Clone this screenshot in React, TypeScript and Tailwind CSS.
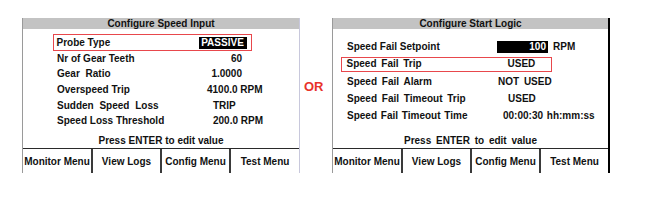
import React from "react";

const font = { fontFamily: '"Liberation Sans", Arial, sans-serif' };

function Buttons({ widths }: { widths: string[] }) {
  const labels = ["Monitor Menu", "View Logs", "Config Menu", "Test Menu"];
  return (
    <div className="flex h-[25px] border-t-[1.5px] border-[#2a2a2a]">
      {labels.map((l, i) => (
        <div
          key={l}
          className={`${widths[i]} flex items-center justify-center pt-[2px] ${i > 0 ? "border-l-2 border-[#3a3a3a]" : ""}`}
        >
          {l}
        </div>
      ))}
    </div>
  );
}

export default function App() {
  return (
    <div
      className="w-[649px] h-[209px] bg-white flex items-start pt-[18px] text-[10px] font-bold text-[#111] leading-[12px]"
      style={font}
    >
      {/* Left panel */}
      <div className="ml-[22px] w-[278px] h-[155px] border-l border-l-[#9a9a9a] border-r border-r-[#c8c8dc] flex flex-col">
        <div className="h-[11px] bg-[#c3c3c3] text-center leading-[11px]">Configure Speed Input</div>
        <div className="pt-[5px] flex flex-col">
          <div className="h-[17px] flex items-center">
            <div className="ml-[30px] w-[199px] h-[17px] border-[1.5px] border-[#e8474c] pl-[2.5px] flex items-center">
              <div className="w-[142px]">Probe Type</div>
              <div className="w-[48px] h-[12px] bg-black text-white text-center leading-[12px]">PASSIVE</div>
            </div>
          </div>
          <div className="h-[15.6px] flex items-center">
            <div className="pl-[34px] w-[176px]">Nr of Gear Teeth</div>
            <div className="w-[43px] text-right">60</div>
          </div>
          <div className="h-[15.6px] flex items-center">
            <div className="pl-[34px] w-[176px] [word-spacing:3px]">Gear Ratio</div>
            <div className="w-[43px] text-right">1.0000</div>
          </div>
          <div className="h-[15.6px] flex items-center">
            <div className="pl-[34px] w-[176px]">Overspeed Trip</div>
            <div className="ml-[8px]">4100.0 RPM</div>
          </div>
          <div className="h-[15.6px] flex items-center">
            <div className="pl-[34px] w-[176px] [word-spacing:3px]">Sudden Speed Loss</div>
            <div className="ml-[14px]">TRIP</div>
          </div>
          <div className="h-[15.6px] flex items-center">
            <div className="pl-[34px] w-[176px]">Speed Loss Threshold</div>
            <div className="ml-[14px]">200.0 RPM</div>
          </div>
        </div>
        <div className="flex-1 flex items-end justify-center pb-[1px]">Press ENTER to edit value</div>
        <Buttons widths={["w-[68px]", "w-[69px]", "w-[69px]", "flex-1"]} />
      </div>

      {/* OR */}
      <div className="w-[32px] pt-[62px] pl-[4px]">
        <div className="text-[13px] leading-[14px] font-bold text-[#e8332b]">OR</div>
      </div>

      {/* Right panel */}
      <div className="w-[278px] h-[155px] border-l border-l-[#9a9a9a] border-r-2 border-r-black flex flex-col">
        <div className="h-[11px] bg-[#c3c3c3] text-center leading-[11px]">Configure Start Logic</div>
        <div className="pt-[9.5px] flex flex-col [word-spacing:2px]">
          <div className="h-[17.3px] flex items-center">
            <div className="pl-[14px] w-[164px] [word-spacing:0px]">Speed Fail Setpoint</div>
            <div className="w-[51px] h-[12px] bg-black text-white text-right pr-[2px] leading-[12px]">100</div>
            <div className="ml-[5px]">RPM</div>
          </div>
          <div className="h-[17.3px] flex items-center">
            <div className="ml-[8px] w-[211px] h-[15px] border-[1.5px] border-[#e8474c] pl-[4.5px] flex items-center">
              <div className="w-[150px]">Speed Fail Trip</div>
              <div className="ml-[11px]">USED</div>
            </div>
          </div>
          <div className="h-[17.3px] flex items-center">
            <div className="pl-[14px] w-[164px]">Speed Fail Alarm</div>
            <div className="ml-[1px]">NOT USED</div>
          </div>
          <div className="h-[17.3px] flex items-center">
            <div className="pl-[14px] w-[164px]">Speed Fail Timeout Trip</div>
            <div className="ml-[11px]">USED</div>
          </div>
          <div className="h-[17.3px] flex items-center">
            <div className="pl-[14px] w-[164px] [word-spacing:1px]">Speed Fail Timeout Time</div>
            <div className="ml-[6px] [word-spacing:1px]">00:00:30 hh:mm:ss</div>
          </div>
        </div>
        <div className="flex-1 flex items-end justify-center pb-[1px] [word-spacing:2px]">Press ENTER to edit value</div>
        <Buttons widths={["w-[68px]", "w-[69px]", "w-[69px]", "flex-1"]} />
      </div>
    </div>
  );
}
